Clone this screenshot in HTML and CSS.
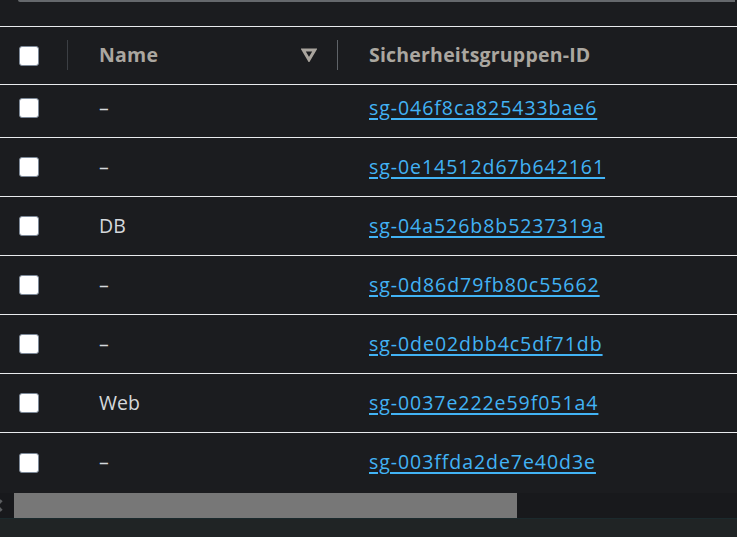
FILE: index.html
```html
<!DOCTYPE html>
<html>
<head>
<meta charset="utf-8">
<link rel="stylesheet" href="styles.css">
</head>
<body>
<div class="page">
  <div class="search-edge"></div>
  <div class="table">
    <div class="row head">
      <div class="cell c-check"><span class="box"></span><span class="sep"></span></div>
      <div class="cell c-name"><span class="th">Name</span>
        <svg class="sort" width="16" height="14" viewBox="0 0 16 14"><path d="M2.2 2 H13.8 L8 11.8 Z" fill="none" stroke="#a9a49d" stroke-width="3" stroke-linejoin="miter"/></svg>
        <span class="sep"></span></div>
      <div class="cell c-id"><span class="th">Sicherheitsgruppen-ID</span></div>
    </div>
    <div class="row first">
      <div class="cell c-check"><span class="box"></span></div>
      <div class="cell c-name">–</div>
      <div class="cell c-id"><a href="#">sg-046f8ca825433bae6</a></div>
    </div>
    <div class="row">
      <div class="cell c-check"><span class="box"></span></div>
      <div class="cell c-name">–</div>
      <div class="cell c-id"><a href="#">sg-0e14512d67b642161</a></div>
    </div>
    <div class="row">
      <div class="cell c-check"><span class="box"></span></div>
      <div class="cell c-name">DB</div>
      <div class="cell c-id"><a href="#">sg-04a526b8b5237319a</a></div>
    </div>
    <div class="row">
      <div class="cell c-check"><span class="box"></span></div>
      <div class="cell c-name">–</div>
      <div class="cell c-id"><a href="#">sg-0d86d79fb80c55662</a></div>
    </div>
    <div class="row">
      <div class="cell c-check"><span class="box"></span></div>
      <div class="cell c-name">–</div>
      <div class="cell c-id"><a href="#">sg-0de02dbb4c5df71db</a></div>
    </div>
    <div class="row">
      <div class="cell c-check"><span class="box"></span></div>
      <div class="cell c-name">Web</div>
      <div class="cell c-id"><a href="#">sg-0037e222e59f051a4</a></div>
    </div>
    <div class="row last">
      <div class="cell c-check"><span class="box"></span></div>
      <div class="cell c-name">–</div>
      <div class="cell c-id"><a href="#">sg-003ffda2de7e40d3e</a></div>
    </div>
  </div>
  <div class="hscroll">
    <span class="arrow"></span>
    <span class="thumb"></span>
  </div>
  <div class="footer"></div>
</div>
</body>
</html>
```

FILE: styles.css
```css
html, body {
  margin: 0;
  padding: 0;
  background: #1b1c1f;
}
body {
  font-family: "Open Sans", "Noto Sans", sans-serif;
  color: #d5d8dc;
  width: 737px;
  height: 537px;
  overflow: hidden;
}
.page {
  display: flex;
  flex-direction: column;
  height: 537px;
}
.search-edge {
  height: 2px;
  margin-left: 18px;
  margin-right: 2px;
  background: #65686c;
  border-bottom-left-radius: 2px;
  flex: none;
}
.table {
  margin-top: 24px;
  border-top: 1px solid #e9ebed;
  flex: none;
}
.row {
  display: flex;
  align-items: center;
  height: 58px;
  border-bottom: 1px solid #e9ebed;
  box-sizing: content-box;
}
.row.head {
  height: 57px;
}
.row.first {
  height: 46px;
  padding-bottom: 6px;
}
.row.last {
  border-bottom: none;
  height: 59px;
}
.cell {
  display: flex;
  align-items: center;
  height: 100%;
  position: relative;
}
.c-check {
  width: 68px;
  padding-left: 19px;
  box-sizing: border-box;
}
.c-name {
  width: 270px;
  padding-left: 31px;
  box-sizing: border-box;
  font-size: 19.5px;
}
.c-id {
  flex: 1;
  padding-left: 31px;
  font-size: 19.5px;
}
.c-name, .c-id {
  padding-bottom: 2px;
  box-sizing: border-box;
}
.box {
  width: 18px;
  height: 18px;
  background: #ffffff;
  border: 1px solid #7d8998;
  border-radius: 3px;
}
.sep {
  position: absolute;
  right: 0;
  top: 13px;
  width: 1px;
  height: 30px;
  background: #5f6368;
}
.c-check .sep {
  background: #3c3f44;
}
.th {
  font-weight: 700;
  color: #aba7a0;
  font-size: 19.5px;
  letter-spacing: 0.2px;
}
.sort {
  position: absolute;
  right: 21px;
  top: 21px;
}
a {
  color: #42b3f5;
  letter-spacing: 0.95px;
  text-decoration: underline;
  text-underline-offset: 3px;
  text-decoration-thickness: 2px;
}
.hscroll {
  height: 25px;
  margin-top: 1px;
  background: #18191c;
  display: flex;
  align-items: stretch;
  flex: none;
}
.arrow {
  width: 14px;
  position: relative;
}
.arrow::before {
  content: "";
  position: absolute;
  left: -4px;
  top: 8px;
  width: 6px;
  height: 6px;
  border-left: 3px solid #5c5e61;
  border-bottom: 3px solid #5c5e61;
  transform: rotate(45deg);
}
.thumb {
  width: 503px;
  background: #777777;
}
.footer {
  flex: 1;
  background: #202425;
  border-top: 1px solid #1b2a2d;
}
```
